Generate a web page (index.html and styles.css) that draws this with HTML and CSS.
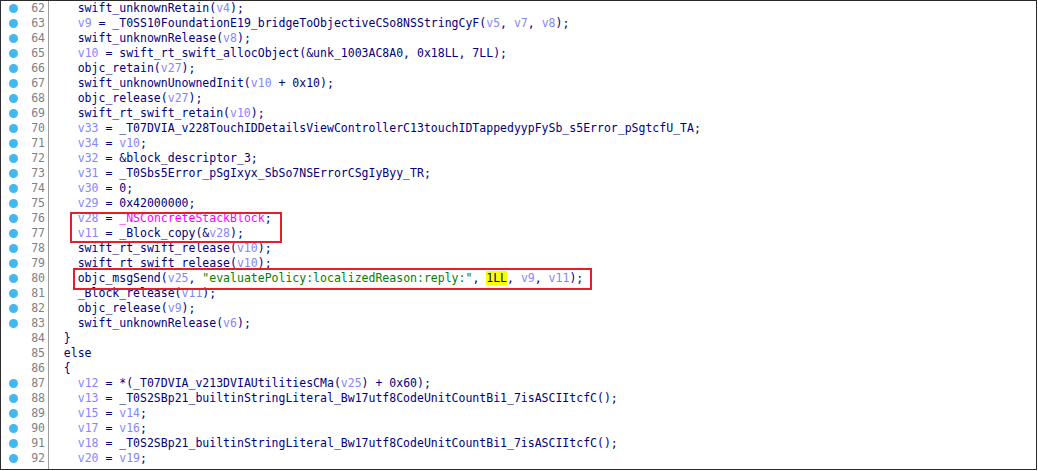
FILE: index.html
```html
<!DOCTYPE html>
<html lang="en">
<head>
    <meta charset="UTF-8">
    <title>Pseudocode</title>
    <link rel="stylesheet" href="styles.css">
</head>
<body>
    <div class="view">
        <div class="gutter">
            <div class="ln"><i class="bp"></i>62</div>
            <div class="ln"><i class="bp"></i>63</div>
            <div class="ln"><i class="bp"></i>64</div>
            <div class="ln"><i class="bp"></i>65</div>
            <div class="ln"><i class="bp"></i>66</div>
            <div class="ln"><i class="bp"></i>67</div>
            <div class="ln"><i class="bp"></i>68</div>
            <div class="ln"><i class="bp"></i>69</div>
            <div class="ln"><i class="bp"></i>70</div>
            <div class="ln"><i class="bp"></i>71</div>
            <div class="ln"><i class="bp"></i>72</div>
            <div class="ln"><i class="bp"></i>73</div>
            <div class="ln"><i class="bp"></i>74</div>
            <div class="ln"><i class="bp"></i>75</div>
            <div class="ln"><i class="bp"></i>76</div>
            <div class="ln"><i class="bp"></i>77</div>
            <div class="ln"><i class="bp"></i>78</div>
            <div class="ln"><i class="bp"></i>79</div>
            <div class="ln"><i class="bp"></i>80</div>
            <div class="ln"><i class="bp"></i>81</div>
            <div class="ln"><i class="bp"></i>82</div>
            <div class="ln"><i class="bp"></i>83</div>
            <div class="ln">84</div>
            <div class="ln">85</div>
            <div class="ln">86</div>
            <div class="ln"><i class="bp"></i>87</div>
            <div class="ln"><i class="bp"></i>88</div>
            <div class="ln"><i class="bp"></i>89</div>
            <div class="ln"><i class="bp"></i>90</div>
            <div class="ln"><i class="bp"></i>91</div>
            <div class="ln"><i class="bp"></i>92</div>
            <div class="ln"><i class="bp"></i></div>
        </div>
        <div class="code">
            <div class="line">    swift_unknownRetain(<span class="v">v4</span>);</div>
            <div class="line">    <span class="v">v9</span> = _T0SS10FoundationE19_bridgeToObjectiveCSo8NSStringCyF(<span class="v">v5</span>, <span class="v">v7</span>, <span class="v">v8</span>);</div>
            <div class="line">    swift_unknownRelease(<span class="v">v8</span>);</div>
            <div class="line">    <span class="v">v10</span> = swift_rt_swift_allocObject(&amp;unk_1003AC8A0, 0x18LL, 7LL);</div>
            <div class="line">    objc_retain(<span class="v">v27</span>);</div>
            <div class="line">    swift_unknownUnownedInit(<span class="v">v10</span> + 0x10);</div>
            <div class="line">    objc_release(<span class="v">v27</span>);</div>
            <div class="line">    swift_rt_swift_retain(<span class="v">v10</span>);</div>
            <div class="line">    <span class="v">v33</span> = _T07DVIA_v228TouchIDDetailsViewControllerC13touchIDTappedyypFySb_s5Error_pSgtcfU_TA;</div>
            <div class="line">    <span class="v">v34</span> = <span class="v">v10</span>;</div>
            <div class="line">    <span class="v">v32</span> = &amp;block_descriptor_3;</div>
            <div class="line">    <span class="v">v31</span> = _T0Sbs5Error_pSgIxyx_SbSo7NSErrorCSgIyByy_TR;</div>
            <div class="line">    <span class="v">v30</span> = 0;</div>
            <div class="line">    <span class="v">v29</span> = 0x42000000;</div>
            <div class="line">    <span class="v">v28</span> = <span class="g">_NSConcreteStackBlock</span>;</div>
            <div class="line">    <span class="v">v11</span> = _Block_copy(&amp;<span class="v">v28</span>);</div>
            <div class="line">    swift_rt_swift_release(<span class="v">v10</span>);</div>
            <div class="line">    swift_rt_swift_release(<span class="v">v10</span>);</div>
            <div class="line">    objc_msgSend(<span class="v">v25</span>, <span class="s">"evaluatePolicy:localizedReason:reply:"</span>, <span class="hl">1LL</span>, <span class="v">v9</span>, <span class="v">v11</span>);</div>
            <div class="line">    _Block_release(<span class="v">v11</span>);</div>
            <div class="line">    objc_release(<span class="v">v9</span>);</div>
            <div class="line">    swift_unknownRelease(<span class="v">v6</span>);</div>
            <div class="line">  }</div>
            <div class="line">  else</div>
            <div class="line">  {</div>
            <div class="line">    <span class="v">v12</span> = *(_T07DVIA_v213DVIAUtilitiesCMa(<span class="v">v25</span>) + 0x60);</div>
            <div class="line">    <span class="v">v13</span> = _T0S2SBp21_builtinStringLiteral_Bw17utf8CodeUnitCountBi1_7isASCIItcfC();</div>
            <div class="line">    <span class="v">v15</span> = <span class="v">v14</span>;</div>
            <div class="line">    <span class="v">v17</span> = <span class="v">v16</span>;</div>
            <div class="line">    <span class="v">v18</span> = _T0S2SBp21_builtinStringLiteral_Bw17utf8CodeUnitCountBi1_7isASCIItcfC();</div>
            <div class="line">    <span class="v">v20</span> = <span class="v">v19</span>;</div>
        </div>
        <div class="mark mark-block"></div>
        <div class="mark mark-call"></div>
    </div>
</body>
</html>
```

FILE: styles.css
```css
body {
    margin: 0;
    background: white;
}

.view {
    position: relative;
    display: flex;
    width: 1035px;
    height: 468px;
    border: 1px solid #2b2b2b;
    overflow: hidden;
    font-family: "DejaVu Sans Mono", "Liberation Mono", monospace;
    font-size: 11.5px;
    line-height: 15px;
}

.gutter {
    width: 47px;
    flex-shrink: 0;
    border-right: 1px solid #a0a0a0;
    color: #808080;
}

.ln {
    display: flex;
    align-items: center;
    justify-content: flex-end;
    height: 15px;
    padding-right: 3px;
    position: relative;
}

.bp {
    position: absolute;
    left: 8px;
    top: 3px;
    width: 9px;
    height: 9px;
    border-radius: 50%;
    background: #41b8f4;
}

.code {
    padding-left: 1px;
    color: #000080;
}

.line {
    height: 15px;
    white-space: pre;
}

.v {
    color: #8585ff;
}

.g {
    color: #ff00ff;
}

.s {
    color: #008000;
}

.hl {
    background: #ffff00;
}

/* red annotation boxes drawn over the listing */
.mark {
    position: absolute;
    border: 2px solid #e81d2a;
}

.mark-block {
    left: 69px;
    top: 211px;
    width: 208px;
    height: 27px;
}

.mark-call {
    left: 72px;
    top: 267px;
    width: 515px;
    height: 18px;
}
```
